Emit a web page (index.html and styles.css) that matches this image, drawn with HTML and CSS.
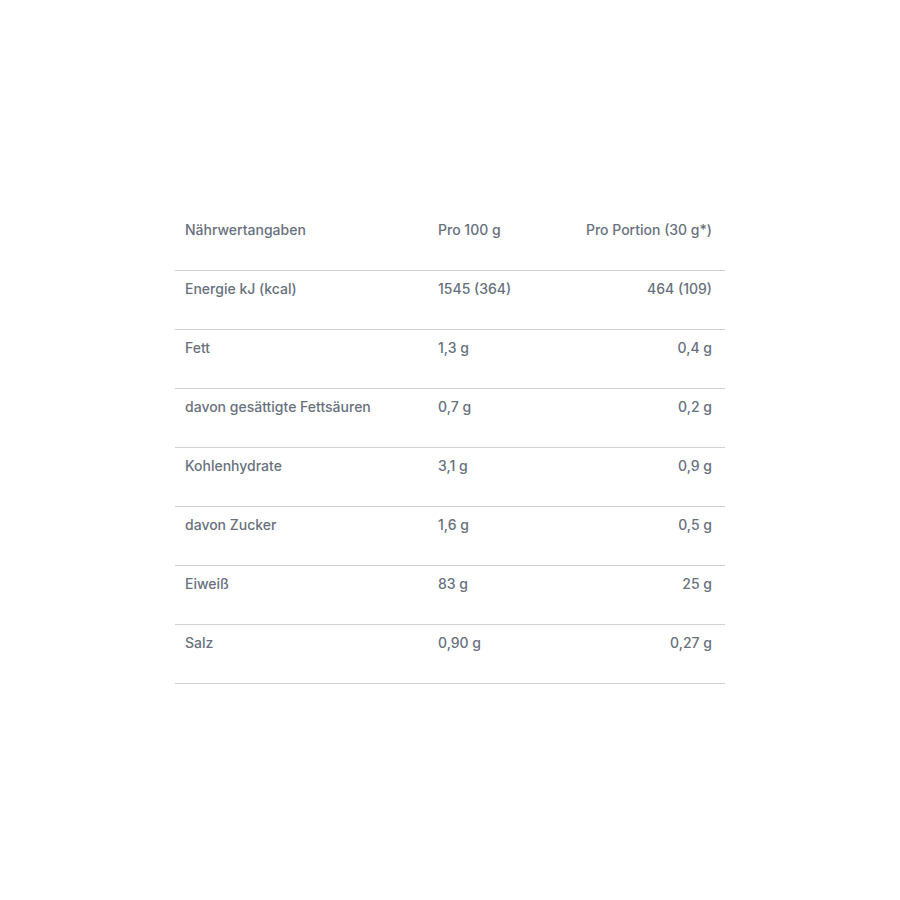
FILE: index.html
```html
<!DOCTYPE html>
<html lang="de">
<head>
<meta charset="utf-8">
<link rel="stylesheet" href="styles.css">
</head>
<body>
<main class="page">
  <table class="nutrition">
    <thead>
      <tr><th>Nährwertangaben</th><th>Pro 100 g</th><th class="r">Pro Portion (30 g*)</th></tr>
    </thead>
    <tbody>
      <tr><td>Energie kJ (kcal)</td><td>1545 (364)</td><td class="r">464 (109)</td></tr>
      <tr><td>Fett</td><td>1,3 g</td><td class="r">0,4 g</td></tr>
      <tr><td>davon gesättigte Fettsäuren</td><td>0,7 g</td><td class="r">0,2 g</td></tr>
      <tr><td>Kohlenhydrate</td><td>3,1 g</td><td class="r">0,9 g</td></tr>
      <tr><td>davon Zucker</td><td>1,6 g</td><td class="r">0,5 g</td></tr>
      <tr><td>Eiweiß</td><td>83 g</td><td class="r">25 g</td></tr>
      <tr><td>Salz</td><td>0,90 g</td><td class="r">0,27 g</td></tr>
    </tbody>
  </table>
</main>
</body>
</html>
```
FILE: styles.css
```css
html, body { margin: 0; padding: 0; background: #fff; }
.page {
  width: 900px;
  height: 900px;
  display: flex;
  justify-content: center;
  padding-top: 212px;
  box-sizing: border-box;
}
.nutrition {
  width: 550px;
  border-collapse: collapse;
  font-family: Inter, "Liberation Sans", sans-serif;
  font-size: 14px;
  color: #68717d;
  height: fit-content;
}
.nutrition th, .nutrition td {
  font-weight: 500;
  text-align: left;
  padding: 8px 10px 30px 10px;
  line-height: 20px;
  border-bottom: 1px solid #cfd1d4;
  vertical-align: top;
}
.nutrition th:first-child, .nutrition td:first-child { width: 233px; }
.nutrition .r { text-align: right; padding-right: 13px; }
```
